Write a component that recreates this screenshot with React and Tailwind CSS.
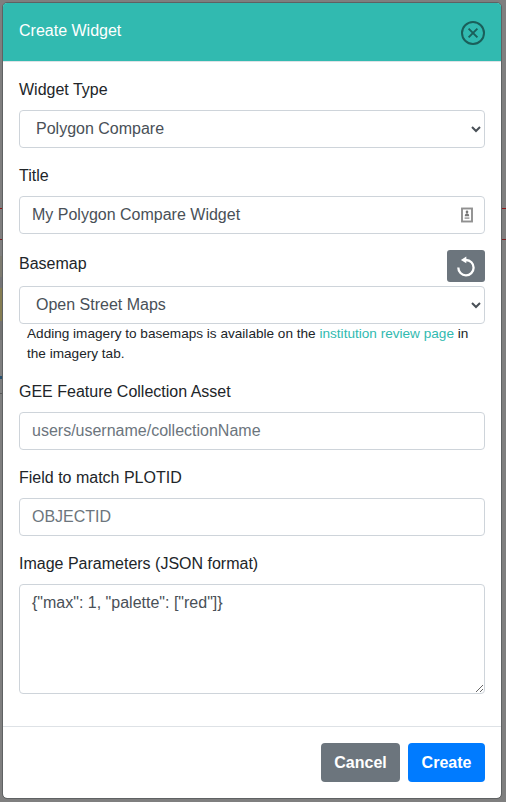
import React from "react";

const control =
  "block h-[38px] w-full rounded border border-[#ced4da] bg-white text-base leading-6 text-[#495057] outline-none placeholder:text-[#6c757d] placeholder:opacity-100";

function Field({ label, children }) {
  return (
    <div className="mb-4">
      <label className="mb-2 block leading-6">{label}</label>
      {children}
    </div>
  );
}

function Select({ value }) {
  return (
    <select className={`${control} px-3 pb-[2px]`} defaultValue={value}>
      <option>{value}</option>
    </select>
  );
}

function CloseIcon() {
  return (
    <svg width="24" height="24" viewBox="0 0 24 24" fill="none" stroke="#1a5f5a">
      <circle cx="12" cy="12" r="11" strokeWidth="2" />
      <path d="M7.6 7.6l8.8 8.8M16.4 7.6l-8.8 8.8" strokeWidth="1.9" />
    </svg>
  );
}

function ResetIcon() {
  return (
    <svg width="20" height="22" viewBox="0 0 20 22" fill="none">
      <path d="M2.3 12.6A7.65 7.65 0 1 0 10 5H9" stroke="#fff" strokeWidth="2.3" />
      <path d="M4.9 4.9L10.3 1.5v6.8z" fill="#fff" />
    </svg>
  );
}

function ContactIcon() {
  return (
    <svg width="12" height="16" viewBox="0 0 12 16" fill="none">
      <rect x="1" y="1.5" width="10" height="13" stroke="#909090" strokeWidth="1.9" />
      <circle cx="6" cy="4.9" r="1.3" fill="#777" />
      <path d="M3.8 9.2C3.8 7 5 6.2 6 6.2s2.2.8 2.2 3z" fill="#777" />
      <path d="M3.6 11.2h4.8" stroke="#aaa" strokeWidth="1.8" />
    </svg>
  );
}

function Backdrop() {
  return (
    <div className="absolute inset-0 flex flex-col bg-[#7f7f7f]">
      <div className="h-[208px]" />
      <div className="h-px bg-[#8b1518]" />
      <div className="h-[30px]" />
      <div className="h-px bg-[#7a1c20]" />
      <div className="h-4" />
      <div className="h-[21px] w-1/2 bg-[#7d7b70]" />
      <div className="h-[11px] w-1/2 bg-[#747476]" />
      <div className="h-[33px] w-1/2 bg-[#857d53]" />
      <div className="h-[19px] w-1/2 bg-[#737373]" />
      <div className="h-[36px]" />
      <div className="h-[3px] w-1/2 bg-[#28506e]" />
      <div className="h-[14px]" />
      <div className="h-px w-1/2 bg-[#595959]" />
    </div>
  );
}

export default function App() {
  return (
    <div className="relative h-[802px] w-[506px] overflow-hidden font-['Liberation_Sans',Arial,sans-serif] text-base text-[#212529]">
      <Backdrop />
      <div className="relative px-[2px] pt-[2px]">
        <div className="w-[500px] overflow-hidden rounded-[5px] border border-[#5f6263] bg-white bg-clip-padding">
          <header className="flex h-[59px] items-start justify-between border-b border-[#dee2e6] bg-[#31bab0] px-4 pt-4">
            <h5 className="leading-6 text-white">Create Widget</h5>
            <button className="mt-[2px]" aria-label="Close">
              <CloseIcon />
            </button>
          </header>

          <main className="p-4">
            <Field label="Widget Type">
              <Select value="Polygon Compare" />
            </Field>

            <Field label="Title">
              <div className="relative">
                <input className={`${control} px-3`} defaultValue="My Polygon Compare Widget" />
                <span className="absolute top-[11px] right-3">
                  <ContactIcon />
                </span>
              </div>
            </Field>

            <div className="mb-4">
              <div className="mb-1 flex h-8 items-start justify-between">
                <label className="pt-[2px] leading-6">Basemap</label>
                <button
                  className="flex h-8 w-[38px] items-center justify-center rounded-[3px] bg-[#6c757d]"
                  aria-label="Refresh"
                >
                  <ResetIcon />
                </button>
              </div>
              <Select value="Open Street Maps" />
              <p className="px-2 text-[13.6px] leading-5">
                Adding imagery to basemaps is available on the{" "}
                <a className="text-[#31bab0]">institution review page</a> in the imagery tab.
              </p>
            </div>

            <Field label="GEE Feature Collection Asset">
              <input className={`${control} px-3`} placeholder="users/username/collectionName" />
            </Field>

            <Field label="Field to match PLOTID">
              <input className={`${control} px-3`} placeholder="OBJECTID" />
            </Field>

            <Field label="Image Parameters (JSON format)">
              <textarea
                className="block h-[110px] w-full rounded border border-[#ced4da] px-3 py-1.5 leading-6 text-[#495057] outline-none"
                defaultValue={'{"max": 1, "palette": ["red"]}'}
              />
            </Field>
          </main>

          <footer className="flex h-[72px] justify-end gap-2 border-t border-[#dee2e6] p-4 font-bold text-white">
            <button className="h-[39px] w-[79px] rounded bg-[#6c757d]">Cancel</button>
            <button className="h-[39px] w-[77px] rounded bg-[#007bff]">Create</button>
          </footer>
        </div>
      </div>
    </div>
  );
}
